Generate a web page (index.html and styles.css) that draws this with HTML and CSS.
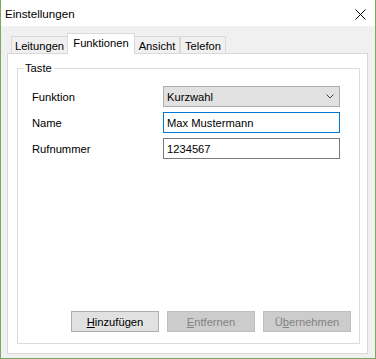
FILE: index.html
```html
<!DOCTYPE html>
<html lang="de">
<head>
    <meta charset="UTF-8">
    <title>Einstellungen</title>
    <link rel="stylesheet" href="styles.css">
</head>
<body>
<div class="fenster">
    <div class="titelleiste">
        <span class="titel">Einstellungen</span>
        <svg class="schliessen" width="11" height="11" viewBox="0 0 11 11">
            <path d="M0.5 0.5 L10.5 10.5 M10.5 0.5 L0.5 10.5" stroke="#000" stroke-width="1" fill="none"/>
        </svg>
    </div>

    <div class="inhalt">
        <div class="reiter">
            <div class="reiter-item reiter-leitungen">Leitungen</div>
            <div class="reiter-item reiter-aktiv">Funktionen</div>
            <div class="reiter-item reiter-ansicht">Ansicht</div>
            <div class="reiter-item reiter-telefon">Telefon</div>
        </div>

        <div class="panel">
            <div class="gruppe">
                <span class="gruppe-titel">Taste</span>

                <div class="zeile">
                    <label>Funktion</label>
                    <div class="auswahl">
                        <span>Kurzwahl</span>
                        <svg width="8" height="5" viewBox="0 0 8 5">
                            <path d="M0.5 0.5 L4 4 L7.5 0.5" stroke="#444" stroke-width="1" fill="none"/>
                        </svg>
                    </div>
                </div>
                <div class="zeile">
                    <label>Name</label>
                    <input type="text" class="feld feld-fokus" value="Max Mustermann">
                </div>
                <div class="zeile">
                    <label>Rufnummer</label>
                    <input type="text" class="feld" value="1234567">
                </div>

                <div class="knoepfe">
                    <button type="button" class="knopf"><u>H</u>inzufügen</button>
                    <button type="button" class="knopf" disabled><u>E</u>ntfernen</button>
                    <button type="button" class="knopf" disabled>Ü<u>b</u>ernehmen</button>
                </div>
            </div>
        </div>
    </div>
</div>
</body>
</html>
```

FILE: styles.css
```css
:root {
    --rahmen-gruen: #7ea65c;
    --grau-hinten: #f0f0f0;
    --linie: #d9d9d9;
    --knopf-bg: #e1e1e1;
    --knopf-rand: #adadad;
    --fokus: #0078d7;
}

* {
    box-sizing: border-box;
    margin: 0;
    padding: 0;
}

body {
    font-family: 'Liberation Sans', Arial, sans-serif;
    font-size: 11.2px;
    color: #000;
    background: #fff;
}

.fenster {
    width: 376px;
    height: 359px;
    border: 1px solid var(--rahmen-gruen);
    border-top: none;
    background: var(--grau-hinten);
    display: flex;
    flex-direction: column;
}

.titelleiste {
    height: 26px;
    background: #fff;
    display: flex;
    align-items: center;
    justify-content: space-between;
    padding: 0 9px 0 4px;
}

.titel {
    font-size: 11.6px;
}

.schliessen {
    display: block;
    margin-top: 2px;
}

.inhalt {
    padding: 7px 7px 4px 6px;
    flex: 1;
    display: flex;
    flex-direction: column;
}

/* Reiter oben */
.reiter {
    display: flex;
    align-items: flex-end;
    height: 20px;
    padding-left: 4px;
}

.reiter-item {
    height: 17px;
    border: 1px solid var(--linie);
    border-bottom: none;
    background: var(--grau-hinten);
    display: flex;
    align-items: center;
    justify-content: center;
    padding-top: 1px;
}

.reiter-leitungen { width: 56px; border-right: none; }
.reiter-ansicht { width: 45px; border-left: none; }
.reiter-telefon { width: 46px; border-left: 1px solid var(--linie); }

.reiter-aktiv {
    width: 68px;
    height: 21px;
    background: #fff;
    margin-bottom: -1px;
    position: relative;
    z-index: 1;
    padding-top: 0;
    padding-bottom: 2px;
}

.panel {
    height: 301px;
    background: #fff;
    border: 1px solid var(--linie);
    padding: 14px 7px 9px 9px;
}

/* Gruppe "Taste" */
.gruppe {
    position: relative;
    height: 276px;
    border: 1px solid #dcdcdc;
    padding: 17px 19px 11px 14px;
    display: flex;
    flex-direction: column;
    gap: 5px;
}

.gruppe-titel {
    position: absolute;
    top: -8px;
    left: 6px;
    background: #fff;
    padding: 0 2px 0 1px;
    line-height: 15px;
}

.zeile {
    display: flex;
    align-items: center;
    height: 21px;
}

.zeile label {
    width: 131px;
}

.auswahl {
    width: 177px;
    height: 21px;
    background: var(--knopf-bg);
    border: 1px solid var(--knopf-rand);
    display: flex;
    align-items: center;
    justify-content: space-between;
    padding: 0 5px 0 3px;
}

.feld {
    width: 177px;
    height: 21px;
    border: 1px solid #7a7a7a;
    font: inherit;
    color: #000;
    padding: 0 3px;
    outline: none;
    background: #fff;
}

.feld-fokus {
    border-color: var(--fokus);
}

.knoepfe {
    margin-top: auto;
    display: flex;
    justify-content: flex-end;
    gap: 8px;
    margin-right: -11px;
}

.knopf {
    width: 88px;
    height: 21px;
    font: inherit;
    background: var(--knopf-bg);
    border: 1px solid var(--knopf-rand);
    color: #000;
}

.knopf:disabled {
    background: #cccccc;
    border-color: #bfbfbf;
    color: #838383;
}
```
